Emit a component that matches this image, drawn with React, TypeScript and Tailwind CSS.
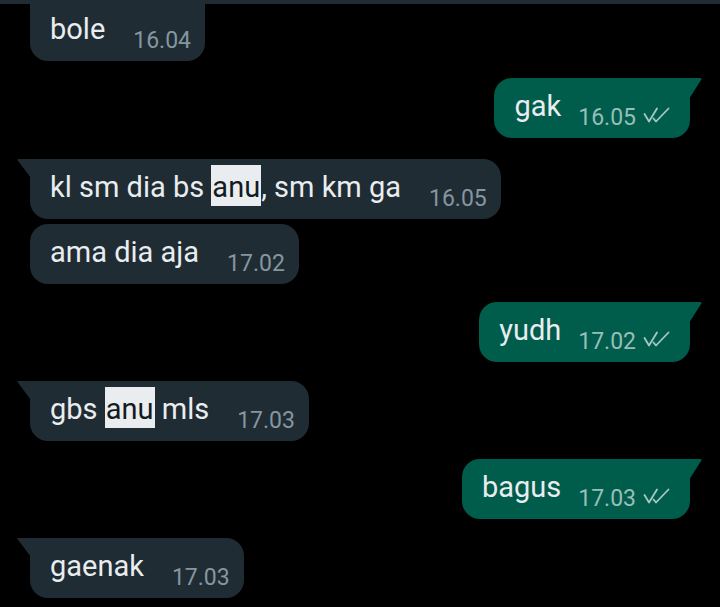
import React from "react";

type Msg = {
  text: React.ReactNode;
  time: string;
  out?: boolean;
  tail?: boolean;
  mt: string;
  first?: boolean;
};

function Hl({ children }: { children: React.ReactNode }) {
  return (
    <span className="bg-[#e9edef] text-[#111b21] pt-[5px] pb-[2px] px-[1px]">
      {children}
    </span>
  );
}

const messages: Msg[] = [
  { text: "bole", time: "16.04", mt: "-mt-[3px]", first: true },
  { text: "gak", time: "16.05", out: true, tail: true, mt: "mt-[17px]" },
  {
    text: (
      <>
        kl sm dia bs <Hl>anu</Hl>, sm km ga
      </>
    ),
    time: "16.05",
    tail: true,
    mt: "mt-[21px]",
  },
  { text: "ama dia aja", time: "17.02", mt: "mt-[5px]" },
  { text: "yudh", time: "17.02", out: true, tail: true, mt: "mt-[18px]" },
  {
    text: (
      <>
        gbs <Hl>anu</Hl> mls
      </>
    ),
    time: "17.03",
    tail: true,
    mt: "mt-[19px]",
  },
  { text: "bagus", time: "17.03", out: true, tail: true, mt: "mt-[18px]" },
  { text: "gaenak", time: "17.03", tail: true, mt: "mt-[19px]" },
];

function DoubleCheck() {
  return (
    <svg width="27" height="16" viewBox="0 0 27 16" fill="none" className="mt-[18px] ml-[7px]">
      <path d="M1.5 7 L6 14.5 L14 1.5" stroke="#a6c9c2" strokeWidth="1.8" strokeLinecap="round" strokeLinejoin="round" />
      <path d="M10.5 11.5 L13 14.5 L25.5 1.5" stroke="#a6c9c2" strokeWidth="1.8" strokeLinecap="round" strokeLinejoin="round" />
    </svg>
  );
}

function Bubble({ m }: { m: Msg }) {
  const out = !!m.out;
  const shape = m.first
    ? "rounded-b-[18px]"
    : out
    ? m.tail
      ? "rounded-[18px] rounded-tr-none"
      : "rounded-[18px]"
    : m.tail
    ? "rounded-[18px] rounded-tl-none"
    : "rounded-[18px]";

  return (
    <div className={`flex ${out ? "justify-end pr-[30px]" : "justify-start pl-[30px]"} ${m.mt}`}>
      <div
        className={`relative flex items-start h-[60px] pt-[11px] pl-[20px] ${
          out ? "bg-[#005c4b] pr-[20px]" : "bg-[#1f2c33] pr-[14px]"
        } ${shape}`}
      >
        {m.tail && !out && (
          <svg width="14" height="19" viewBox="0 0 14 19" className="absolute -left-[13px] top-0">
            <path d="M14 0 L1.5 0 Q-0.5 0 0.8 1.6 L14 19 Z" fill="#1f2c33" />
          </svg>
        )}
        {m.tail && out && (
          <svg width="13" height="21" viewBox="0 0 13 21" className="absolute -right-[12px] top-0">
            <path d="M0 0 L11 0 Q13.5 0 12 2 L0 21 Z" fill="#005c4b" />
          </svg>
        )}
        <span className="text-[29px] leading-[34px] text-[#e9edef] whitespace-nowrap">{m.text}</span>
        <span
          className={`text-[23px] leading-[27px] mt-[15px] whitespace-nowrap ${
            out ? "ml-[17px] text-[#99beb7]" : "ml-[28px] text-[#8696a0]"
          }`}
        >
          {m.time}
        </span>
        {out && <DoubleCheck />}
      </div>
    </div>
  );
}

export default function App() {
  return (
    <div
      className="w-[720px] h-[607px] bg-black overflow-hidden flex flex-col"
      style={{ fontFamily: "Roboto, 'Noto Sans', sans-serif" }}
    >
      <div className="relative z-10 h-[4px] w-full shrink-0 bg-[#1f2c33]" />
      {messages.map((m, i) => (
        <Bubble key={i} m={m} />
      ))}
    </div>
  );
}
